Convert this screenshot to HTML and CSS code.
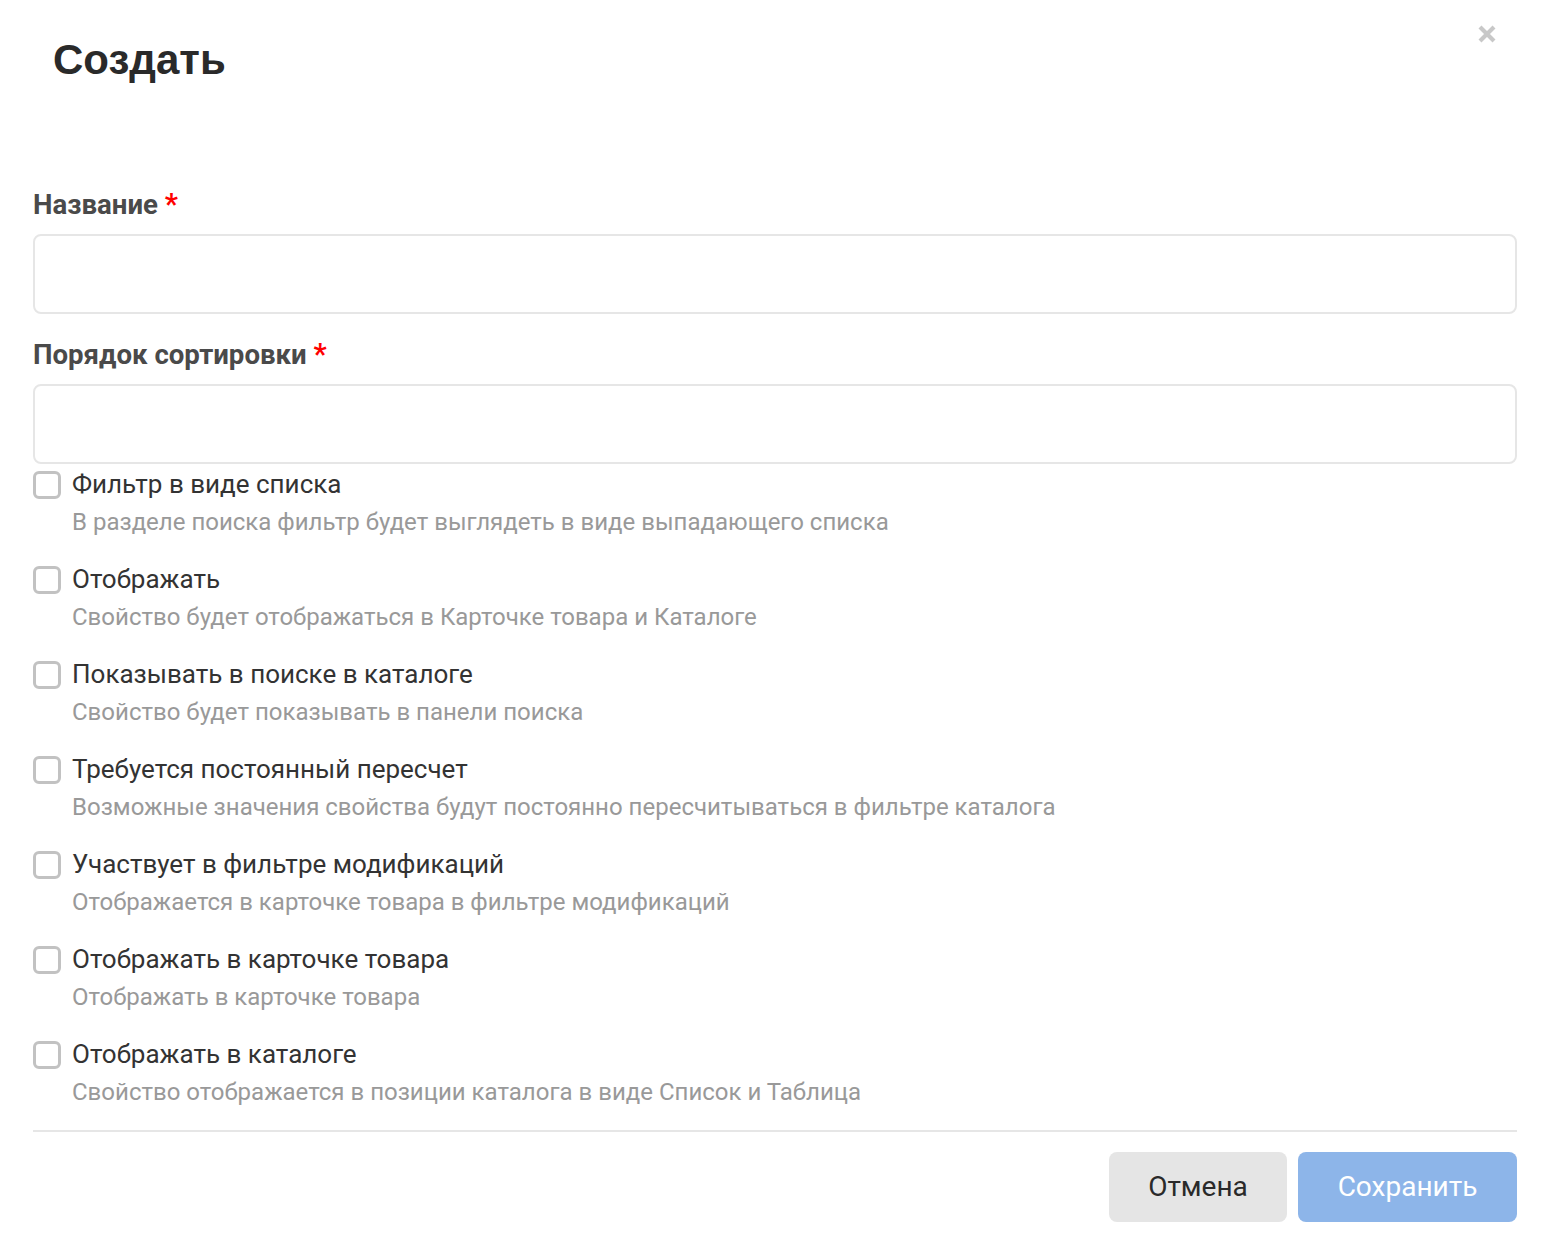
FILE: index.html
```html
<!DOCTYPE html>
<html lang="ru">
<head>
<meta charset="utf-8">
<title>Создать</title>
<link rel="stylesheet" href="styles.css">
</head>
<body>
<div class="modal">
  <div class="modal-header">
    <h1 class="modal-title">Создать</h1>
    <button class="close-btn" aria-label="Закрыть">
      <svg width="20" height="20" viewBox="0 0 20 20"><path d="M3 3 L17 17 M17 3 L3 17" stroke="#c8c8c8" stroke-width="4.2" stroke-linecap="butt"/></svg>
    </button>
  </div>
  <div class="modal-body">
    <div class="field">
      <label class="field-label">Название <span class="req">*</span></label>
      <input class="field-input" type="text">
    </div>
    <div class="field">
      <label class="field-label">Порядок сортировки <span class="req">*</span></label>
      <input class="field-input" type="text">
    </div>
    <div class="checks">
      <div class="check">
        <div class="check-row"><span class="box"></span><span class="check-label">Фильтр в виде списка</span></div>
        <div class="check-desc">В разделе поиска фильтр будет выглядеть в виде выпадающего списка</div>
      </div>
      <div class="check">
        <div class="check-row"><span class="box"></span><span class="check-label">Отображать</span></div>
        <div class="check-desc">Свойство будет отображаться в Карточке товара и Каталоге</div>
      </div>
      <div class="check">
        <div class="check-row"><span class="box"></span><span class="check-label">Показывать в поиске в каталоге</span></div>
        <div class="check-desc">Свойство будет показывать в панели поиска</div>
      </div>
      <div class="check">
        <div class="check-row"><span class="box"></span><span class="check-label">Требуется постоянный пересчет</span></div>
        <div class="check-desc">Возможные значения свойства будут постоянно пересчитываться в фильтре каталога</div>
      </div>
      <div class="check">
        <div class="check-row"><span class="box"></span><span class="check-label">Участвует в фильтре модификаций</span></div>
        <div class="check-desc">Отображается в карточке товара в фильтре модификаций</div>
      </div>
      <div class="check">
        <div class="check-row"><span class="box"></span><span class="check-label">Отображать в карточке товара</span></div>
        <div class="check-desc">Отображать в карточке товара</div>
      </div>
      <div class="check">
        <div class="check-row"><span class="box"></span><span class="check-label">Отображать в каталоге</span></div>
        <div class="check-desc">Свойство отображается в позиции каталога в виде Список и Таблица</div>
      </div>
    </div>
  </div>
  <div class="modal-footer">
    <button class="btn btn-cancel">Отмена</button>
    <button class="btn btn-save">Сохранить</button>
  </div>
</div>
</body>
</html>
```
FILE: styles.css
```css
* { box-sizing: border-box; }
html, body { margin: 0; padding: 0; background: #fff; }
body { font-family: Roboto, "Noto Sans", sans-serif; }

.modal {
  position: relative;
  width: 1550px;
  padding: 0 33px 0 33px;
}

.modal-header {
  padding: 35px 0 0 20px;
  height: 190px;
}
.modal-title {
  margin: 0;
  font-family: "Liberation Sans", Arial, sans-serif;
  font-weight: 700;
  font-size: 42px;
  line-height: 50px;
  color: #2a2a2a;
}
.close-btn {
  position: absolute;
  top: 24px;
  right: 53px;
  width: 20px;
  height: 20px;
  padding: 0;
  border: 0;
  background: none;
  display: block;
}
.close-btn svg { display: block; }

.field { display: flex; flex-direction: column; }
.field + .field { margin-top: 26px; }
.field-label {
  font-weight: 700;
  font-size: 27.6px;
  line-height: 30px;
  height: 30px;
  color: #4a4a4a;
  margin-bottom: 14px;
}
.req { color: #ff0000; font-size: 29px; line-height: 1; }
.field-input {
  height: 80px;
  width: 100%;
  border: 2px solid #e6e6e6;
  border-radius: 8px;
  background: #fff;
  font: inherit;
  outline: none;
}

.checks {
  margin-top: 5px;
  display: flex;
  flex-direction: column;
  gap: 27px;
}
.check { display: flex; flex-direction: column; gap: 8px; }
.check-row {
  display: flex;
  align-items: center;
  gap: 11px;
  height: 30px;
}
.box {
  width: 28px;
  height: 28px;
  border: 3px solid #c2c2c2;
  border-radius: 6px;
  flex: none;
  margin-top: 2px;
}
.check-label {
  font-size: 26px;
  line-height: 30px;
  color: #333;
}
.check-desc {
  padding-left: 39px;
  font-size: 24px;
  line-height: 30px;
  color: #999;
}

.modal-footer {
  margin-top: 23px;
  border-top: 2px solid #e6e6e6;
  padding-top: 20px;
  display: flex;
  justify-content: flex-end;
  gap: 11px;
}
.btn {
  height: 70px;
  padding: 0 0 2px;
  border: 0;
  border-radius: 8px;
  font-family: Roboto, sans-serif;
  font-size: 28px;
}
.btn-cancel { background: #e5e5e5; color: #2a2a2a; width: 178px; }
.btn-save { background: #8db5e9; color: #fff; width: 219px; }
```
